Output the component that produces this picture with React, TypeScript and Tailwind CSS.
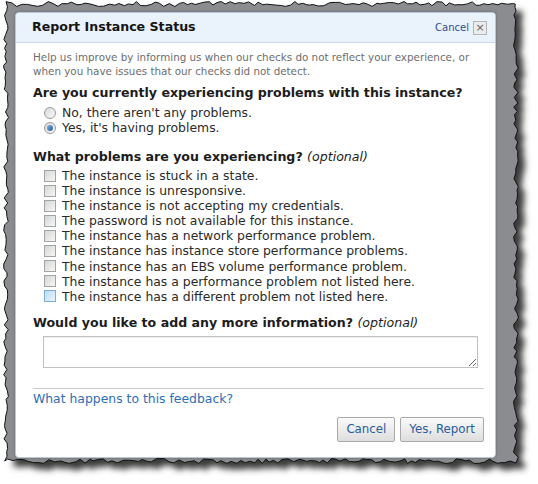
import React from "react"

// torn-paper frame around the screenshot, generated once
const makeTorn = (x0: number, y0: number, x1: number, y1: number, seed: number) => {
  let s = seed
  const rnd = () => {
    s = (s * 16807) % 2147483647
    return s / 2147483647
  }
  const j = () => (rnd() - 0.5) * 5
  const pts: string[] = []
  for (let x = x0; x < x1; x += 3 + rnd() * 3) pts.push(`${x.toFixed(1)},${(y0 + j()).toFixed(1)}`)
  for (let y = y0; y < y1; y += 3 + rnd() * 3) pts.push(`${(x1 + j()).toFixed(1)},${y.toFixed(1)}`)
  for (let x = x1; x > x0; x -= 3 + rnd() * 3) pts.push(`${x.toFixed(1)},${(y1 + j()).toFixed(1)}`)
  for (let y = y1; y > y0; y -= 3 + rnd() * 3) pts.push(`${(x0 + j()).toFixed(1)},${y.toFixed(1)}`)
  return pts.join(" ")
}

const TORN = makeTorn(6, 4, 516, 461, 4242)

const PROBLEMS = [
  "The instance is stuck in a state.",
  "The instance is unresponsive.",
  "The instance is not accepting my credentials.",
  "The password is not available for this instance.",
  "The instance has a network performance problem.",
  "The instance has instance store performance problems.",
  "The instance has an EBS volume performance problem.",
  "The instance has a performance problem not listed here.",
  "The instance has a different problem not listed here.",
]

const Radio = ({ checked }: { checked?: boolean }) => (
  <span className="flex h-[12px] w-[12px] shrink-0 items-center justify-center rounded-full border border-[#9a9a9a] bg-gradient-to-br from-[#d8d8d8] to-[#fafafa]">
    {checked && (
      <span className="h-[6px] w-[6px] rounded-full bg-gradient-to-br from-[#7fb2e0] to-[#1e5c9c]" />
    )}
  </span>
)

const Check = ({ hover }: { hover?: boolean }) => (
  <span
    className={`block h-[12px] w-[12px] shrink-0 border ${
      hover
        ? "border-[#7aaed6] bg-gradient-to-br from-[#b9dcf5] to-[#eaf5fd]"
        : "border-[#a3a3a3] bg-gradient-to-br from-[#d6d6d6] to-[#f7f7f7]"
    }`}
  />
)

export default function App() {
  return (
    <div
      className="relative h-[484px] w-[538px] overflow-hidden bg-white text-[#2a2a2a]"
      style={{ fontFamily: '"DejaVu Sans", Verdana, sans-serif' }}
    >
      <svg className="absolute inset-0" width="538" height="484">
        <defs>
          <filter id="blur" x="-10%" y="-10%" width="120%" height="120%">
            <feGaussianBlur stdDeviation="3" />
          </filter>
        </defs>
        <polygon points={TORN} transform="translate(7,7)" fill="#3a3a3a" filter="url(#blur)" />
        <polygon points={TORN} fill="#8a8c90" stroke="#111" strokeWidth="1" />
      </svg>

      <div className="relative pl-[15px] pt-[12px]">
        <div className="flex h-[446px] w-[481px] flex-col overflow-hidden rounded-[4px] border border-[#b9c8d8] bg-white shadow-[0_0_3px_rgba(0,0,0,0.25)]">
          <div className="flex h-[30px] shrink-0 items-center justify-between border-b border-[#c9d8ea] bg-[#eaf2fc] pl-[16px] pr-[8px]">
            <span className="text-[12.6px] font-bold text-[#151515]">Report Instance Status</span>
            <div className="flex items-center gap-[4px]">
              <span className="text-[10px] text-[#2f4f8f]">Cancel</span>
              <span className="flex h-[14px] w-[14px] items-center justify-center border border-[#b5b5b5] bg-[#ececec] text-[11px] leading-none text-[#666]">
                ×
              </span>
            </div>
          </div>

          <div className="flex grow flex-col pl-[17px] pr-[11px]">
            <p className="mt-[7px] text-[10.35px] leading-[14px] text-[#6d6d6d]">
              Help us improve by informing us when our checks do not reflect your experience, or
              <br />
              when you have issues that our checks did not detect.
            </p>

            <h3 className="mt-[7px] text-[12.6px] font-bold leading-[16px] text-[#1c1c1c]">
              Are you currently experiencing problems with this instance?
            </h3>
            <div className="mt-[4px] flex flex-col pl-[11px] text-[12.4px] leading-[15px]">
              <label className="flex items-center gap-[6px]">
                <Radio />
                No, there aren't any problems.
              </label>
              <label className="flex items-center gap-[6px]">
                <Radio checked />
                Yes, it's having problems.
              </label>
            </div>

            <h3 className="mt-[14px] text-[12.6px] font-bold leading-[16px] text-[#1c1c1c]">
              What problems are you experiencing?{" "}
              <span className="font-normal italic">(optional)</span>
            </h3>
            <div className="mt-[3px] flex flex-col pl-[11px] text-[12.4px] leading-[15.1px]">
              {PROBLEMS.map((p, i) => (
                <label key={p} className="flex items-center gap-[6px]">
                  <Check hover={i === PROBLEMS.length - 1} />
                  {p}
                </label>
              ))}
            </div>

            <h3 className="mt-[11px] text-[12.6px] font-bold leading-[16px] text-[#1c1c1c]">
              Would you like to add any more information?{" "}
              <span className="font-normal italic">(optional)</span>
            </h3>
            <textarea className="ml-[10px] mt-[5px] h-[32px] w-[435px] resize border border-[#c2c2c2] shadow-[inset_0_1px_1px_rgba(0,0,0,0.08)]" />

            <div className="mt-[20px] border-t border-[#c8c8c8]" />
            <a className="mt-[2px] text-[12.4px] leading-[16px] text-[#2f6db5]">What happens to this feedback?</a>

            <div className="mt-[10px] flex justify-end gap-[5px]">
              <button className="h-[25px] rounded-[2px] border border-[#a9a9a9] bg-gradient-to-b from-[#fafafa] to-[#dedede] px-[8px] text-[11.8px] text-[#2b5c9c]">
                Cancel
              </button>
              <button className="h-[25px] rounded-[2px] border border-[#a9a9a9] bg-gradient-to-b from-[#fafafa] to-[#dedede] px-[8px] text-[11.8px] text-[#2b5c9c]">
                Yes, Report
              </button>
            </div>
          </div>
        </div>
      </div>
    </div>
  )
}
